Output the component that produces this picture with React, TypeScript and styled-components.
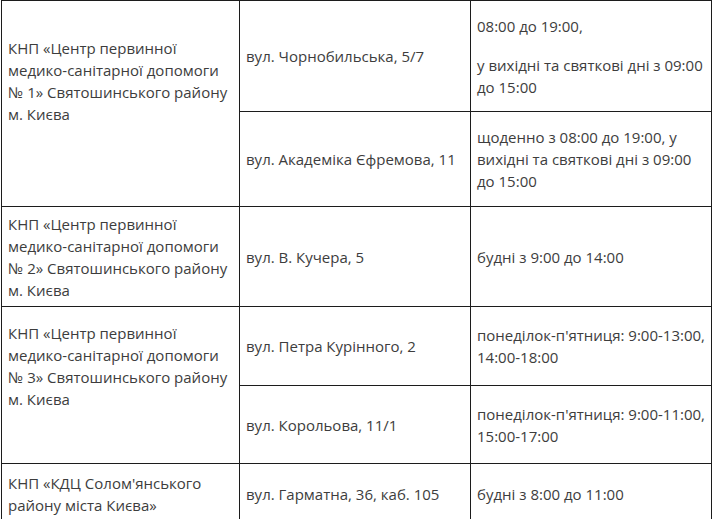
import styled, { createGlobalStyle } from 'styled-components';

const GlobalStyle = createGlobalStyle`
    html, body {
        margin: 0;
        padding: 0;
        background: #ffffff;
    }
    body {
        font-family: "Open Sans", "Noto Sans", sans-serif;
        overflow: hidden;
    }
`;

interface Place {
    address: string;
    hours: string[][];
    height: number;
}

interface Clinic {
    name: string[];
    places: Place[];
    shift: number;
}

const clinics: Clinic[] = [
    {
        name: ['КНП «Центр первинної', 'медико-санітарної допомоги', '№ 1» Святошинського району', 'м. Києва'],
        shift: 46,
        places: [
            { address: 'вул. Чорнобильська, 5/7', hours: [['08:00 до 19:00,'], ['у вихідні та святкові дні з 09:00', 'до 15:00']], height: 111 },
            { address: 'вул. Академіка Єфремова, 11', hours: [['щоденно з 08:00 до 19:00, у', 'вихідні та святкові дні з 09:00', 'до 15:00']], height: 95 },
        ],
    },
    {
        name: ['КНП «Центр первинної', 'медико-санітарної допомоги', '№ 2» Святошинського району', 'м. Києва'],
        shift: 0,
        places: [
            { address: 'вул. В. Кучера, 5', hours: [['будні з 9:00 до 14:00']], height: 100 },
        ],
    },
    {
        name: ['КНП «Центр первинної', 'медико-санітарної допомоги', '№ 3» Святошинського району', 'м. Києва'],
        shift: 38,
        places: [
            { address: 'вул. Петра Курінного, 2', hours: [['понеділок-п\'ятниця: 9:00-13:00,', '14:00-18:00']], height: 79 },
            { address: 'вул. Корольова, 11/1', hours: [['понеділок-п\'ятниця: 9:00-11:00,', '15:00-17:00']], height: 78 },
        ],
    },
    {
        name: ['КНП «КДЦ Солом\'янського', 'району міста Києва»'],
        shift: 0,
        places: [
            { address: 'вул. Гарматна, 36, каб. 105', hours: [['будні з 8:00 до 11:00']], height: 60 },
        ],
    },
];

export default function App(): JSX.Element {
    return (
        <Page>
            <GlobalStyle />
            <Table>
                <colgroup>
                    <col style={{ width: 238 }} />
                    <col style={{ width: 231 }} />
                    <col style={{ width: 241 }} />
                </colgroup>
                <tbody>
                    <tr>
                        <CutCell />
                        <CutCell />
                        <CutCell />
                    </tr>
                    {clinics.map((clinic, ci) =>
                        clinic.places.map((place, pi) => (
                            <Row key={ci + '-' + pi} $height={place.height}>
                                {pi === 0 && (
                                    <Cell rowSpan={clinic.places.length} $shift={clinic.shift}>
                                        {clinic.name.map((line, li) => (
                                            <Line key={li}>{line}</Line>
                                        ))}
                                    </Cell>
                                )}
                                <Cell $shift={0}>{place.address}</Cell>
                                <Cell $shift={0}>
                                    {place.hours.map((para, hi) => (
                                        <Para key={hi}>
                                            {para.map((line, li) => (
                                                <Line key={li}>{line}</Line>
                                            ))}
                                        </Para>
                                    ))}
                                </Cell>
                            </Row>
                        ))
                    )}
                </tbody>
            </Table>
        </Page>
    );
}

const Page = styled.div`
    width: 714px;
    height: 527px;
    padding-left: 1px;
    margin-top: -8px;
`;

const Table = styled.table`
    border-collapse: collapse;
    table-layout: fixed;
    width: 711px;
    color: #3d3d3d;
    font-size: 15px;
    line-height: 22px;
`;

const CutCell = styled.td`
    height: 8px;
    padding: 0;
    border-left: 1px solid #1c1c1c;
    border-right: 1px solid #1c1c1c;
    border-bottom: 1px solid #1c1c1c;
    &:first-child {
        border-left: none;
    }
    &:last-child {
        border-right: none;
    }
`;

const Row = styled.tr<{ $height: number }>`
    height: ${props => props.$height}px;
`;

const Cell = styled.td<{ $shift: number }>`
    border: 1px solid #1c1c1c;
    padding: 0 5px ${props => props.$shift}px 6px;
    vertical-align: middle;
    white-space: nowrap;
`;

const Para = styled.div`
    & + & {
        margin-top: 17px;
    }
`;

const Line = styled.div``;
